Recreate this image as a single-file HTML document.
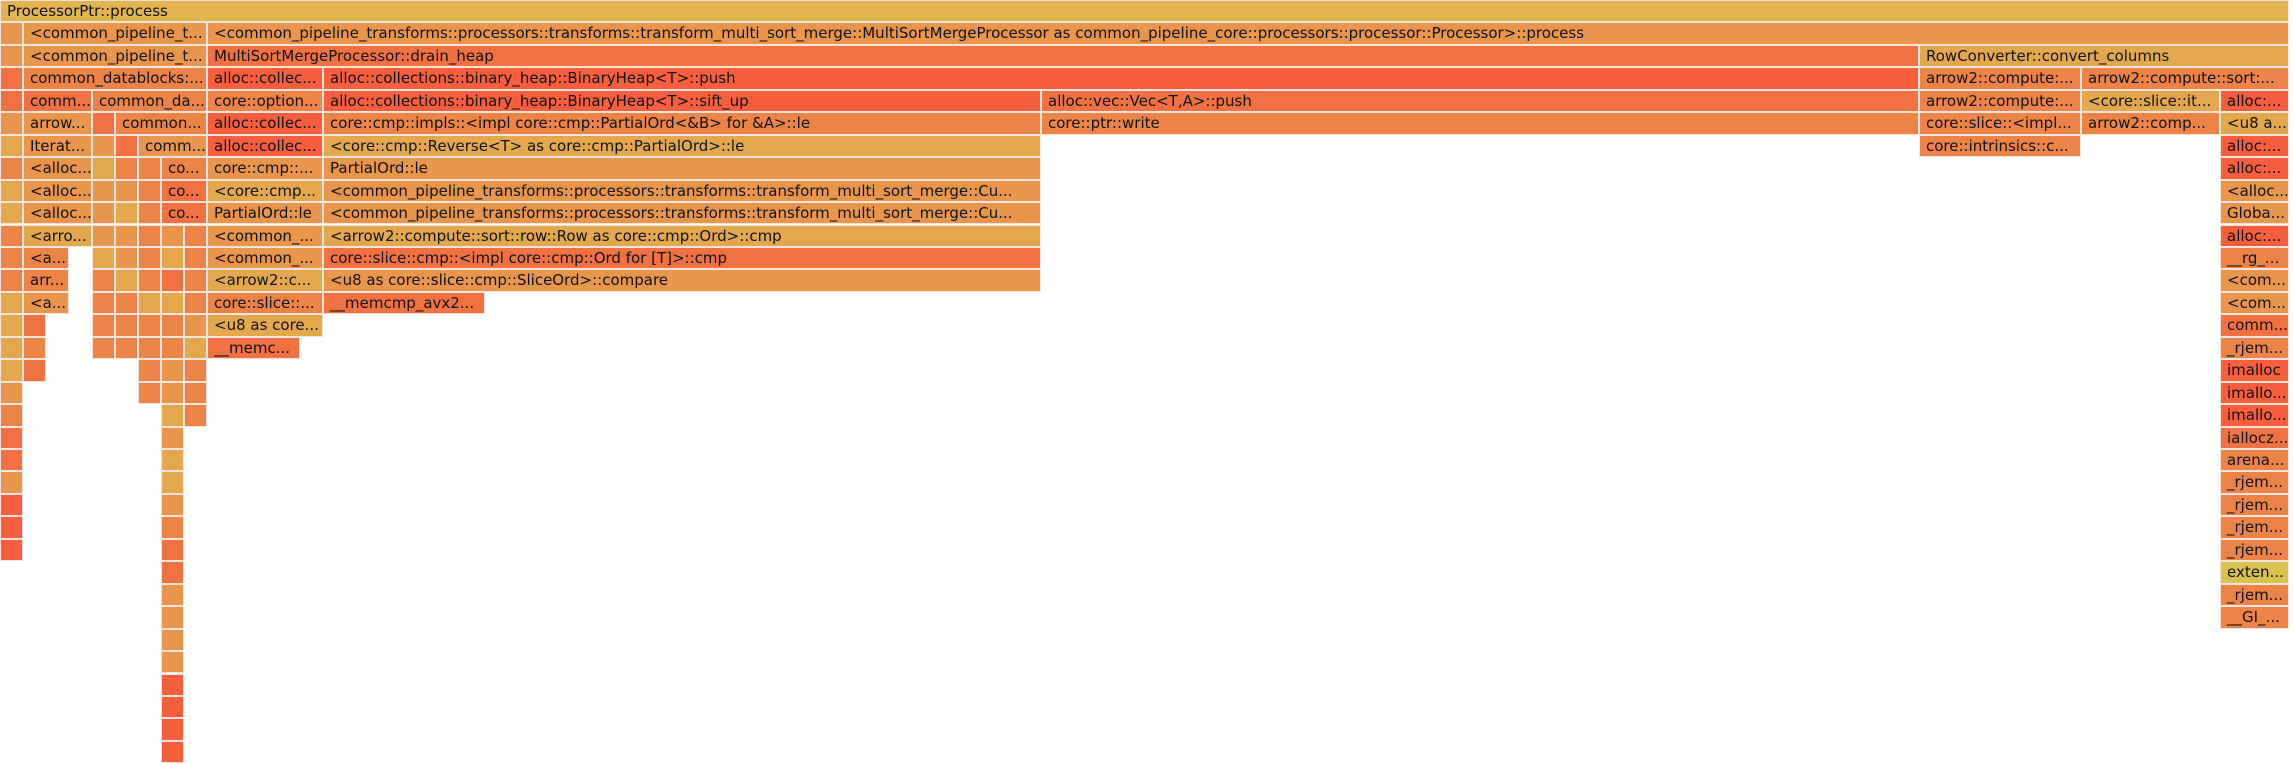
<!DOCTYPE html>
<html><head><meta charset="utf-8"><style>
html,body{margin:0;padding:0;background:#fff;width:2293px;height:764px;overflow:hidden}
.row{position:absolute;left:0;height:22.45px;width:2293px;top:calc(var(--r)*22.45px)}
.f{position:absolute;top:0;height:22.45px;box-sizing:border-box;border:1px solid #f4e3dc;font:15px "DejaVu Sans","Liberation Sans",sans-serif;color:#111;white-space:nowrap;overflow:hidden;padding-left:6px;line-height:20px}
.t{background:#e2b552}
.y{background:#e3a84e}
.a{background:#e7964c}
.b{background:#ec8447}
.c{background:#f07242}
.r{background:#f65e3e}
.g{background:#d9c24f}
</style></head><body>
<div class="row" style="--r:0"><div class="f t" style="left:0;width:2289px">ProcessorPtr::process</div></div>
<div class="row" style="--r:1"><div class="f a" style="left:0;width:23px"></div><div class="f a" style="left:23px;width:184px">&lt;common_pipeline_t...</div><div class="f a" style="left:207px;width:2082px">&lt;common_pipeline_transforms::processors::transforms::transform_multi_sort_merge::MultiSortMergeProcessor as common_pipeline_core::processors::processor::Processor&gt;::process</div></div>
<div class="row" style="--r:2"><div class="f a" style="left:0;width:23px"></div><div class="f a" style="left:23px;width:184px">&lt;common_pipeline_t...</div><div class="f c" style="left:207px;width:1712px">MultiSortMergeProcessor::drain_heap</div><div class="f y" style="left:1919px;width:370px">RowConverter::convert_columns</div></div>
<div class="row" style="--r:3"><div class="f c" style="left:0;width:23px"></div><div class="f b" style="left:23px;width:184px">common_datablocks:...</div><div class="f r" style="left:207px;width:116px">alloc::collec...</div><div class="f r" style="left:323px;width:1596px">alloc::collections::binary_heap::BinaryHeap&lt;T&gt;::push</div><div class="f b" style="left:1919px;width:162px">arrow2::compute:...</div><div class="f b" style="left:2081px;width:208px">arrow2::compute::sort:...</div></div>
<div class="row" style="--r:4"><div class="f c" style="left:0;width:23px"></div><div class="f c" style="left:23px;width:69px">comm...</div><div class="f b" style="left:92px;width:115px">common_da...</div><div class="f b" style="left:207px;width:116px">core::option...</div><div class="f r" style="left:323px;width:718px">alloc::collections::binary_heap::BinaryHeap&lt;T&gt;::sift_up</div><div class="f c" style="left:1041px;width:878px">alloc::vec::Vec&lt;T,A&gt;::push</div><div class="f b" style="left:1919px;width:162px">arrow2::compute:...</div><div class="f y" style="left:2081px;width:139px">&lt;core::slice::it...</div><div class="f r" style="left:2220px;width:69px">alloc:...</div></div>
<div class="row" style="--r:5"><div class="f a" style="left:0;width:23px"></div><div class="f a" style="left:23px;width:69px">arrow...</div><div class="f c" style="left:92px;width:23px"></div><div class="f b" style="left:115px;width:92px">common...</div><div class="f r" style="left:207px;width:116px">alloc::collec...</div><div class="f b" style="left:323px;width:718px">core::cmp::impls::&lt;impl core::cmp::PartialOrd&lt;&amp;B&gt; for &amp;A&gt;::le</div><div class="f b" style="left:1041px;width:878px">core::ptr::write</div><div class="f b" style="left:1919px;width:162px">core::slice::&lt;impl...</div><div class="f b" style="left:2081px;width:139px">arrow2::comp...</div><div class="f y" style="left:2220px;width:69px">&lt;u8 a...</div></div>
<div class="row" style="--r:6"><div class="f y" style="left:0;width:23px"></div><div class="f a" style="left:23px;width:69px">Iterat...</div><div class="f a" style="left:92px;width:23px"></div><div class="f c" style="left:115px;width:23px"></div><div class="f a" style="left:138px;width:69px">comm...</div><div class="f r" style="left:207px;width:116px">alloc::collec...</div><div class="f y" style="left:323px;width:718px">&lt;core::cmp::Reverse&lt;T&gt; as core::cmp::PartialOrd&gt;::le</div><div class="f b" style="left:1919px;width:162px">core::intrinsics::c...</div><div class="f r" style="left:2220px;width:69px">alloc:...</div></div>
<div class="row" style="--r:7"><div class="f b" style="left:0;width:23px"></div><div class="f a" style="left:23px;width:69px">&lt;alloc...</div><div class="f y" style="left:92px;width:23px"></div><div class="f b" style="left:115px;width:23px"></div><div class="f b" style="left:138px;width:23px"></div><div class="f b" style="left:161px;width:46px">co...</div><div class="f a" style="left:207px;width:116px">core::cmp::...</div><div class="f a" style="left:323px;width:718px">PartialOrd::le</div><div class="f r" style="left:2220px;width:69px">alloc:...</div></div>
<div class="row" style="--r:8"><div class="f y" style="left:0;width:23px"></div><div class="f a" style="left:23px;width:69px">&lt;alloc...</div><div class="f a" style="left:92px;width:23px"></div><div class="f a" style="left:115px;width:23px"></div><div class="f b" style="left:138px;width:23px"></div><div class="f c" style="left:161px;width:46px">co...</div><div class="f y" style="left:207px;width:116px">&lt;core::cmp...</div><div class="f a" style="left:323px;width:718px">&lt;common_pipeline_transforms::processors::transforms::transform_multi_sort_merge::Cu...</div><div class="f a" style="left:2220px;width:69px">&lt;alloc...</div></div>
<div class="row" style="--r:9"><div class="f y" style="left:0;width:23px"></div><div class="f a" style="left:23px;width:69px">&lt;alloc...</div><div class="f a" style="left:92px;width:23px"></div><div class="f y" style="left:115px;width:23px"></div><div class="f b" style="left:138px;width:23px"></div><div class="f c" style="left:161px;width:46px">co...</div><div class="f a" style="left:207px;width:116px">PartialOrd::le</div><div class="f a" style="left:323px;width:718px">&lt;common_pipeline_transforms::processors::transforms::transform_multi_sort_merge::Cu...</div><div class="f a" style="left:2220px;width:69px">Globa...</div></div>
<div class="row" style="--r:10"><div class="f b" style="left:0;width:23px"></div><div class="f y" style="left:23px;width:69px">&lt;arro...</div><div class="f a" style="left:92px;width:23px"></div><div class="f a" style="left:115px;width:23px"></div><div class="f b" style="left:138px;width:23px"></div><div class="f a" style="left:161px;width:23px"></div><div class="f b" style="left:184px;width:23px"></div><div class="f a" style="left:207px;width:116px">&lt;common_...</div><div class="f y" style="left:323px;width:718px">&lt;arrow2::compute::sort::row::Row as core::cmp::Ord&gt;::cmp</div><div class="f r" style="left:2220px;width:69px">alloc:...</div></div>
<div class="row" style="--r:11"><div class="f b" style="left:0;width:23px"></div><div class="f b" style="left:23px;width:46px">&lt;a...</div><div class="f y" style="left:92px;width:23px"></div><div class="f a" style="left:115px;width:23px"></div><div class="f b" style="left:138px;width:23px"></div><div class="f y" style="left:161px;width:23px"></div><div class="f b" style="left:184px;width:23px"></div><div class="f a" style="left:207px;width:116px">&lt;common_...</div><div class="f c" style="left:323px;width:718px">core::slice::cmp::&lt;impl core::cmp::Ord for [T]&gt;::cmp</div><div class="f b" style="left:2220px;width:69px">__rg_...</div></div>
<div class="row" style="--r:12"><div class="f b" style="left:0;width:23px"></div><div class="f b" style="left:23px;width:46px">arr...</div><div class="f b" style="left:92px;width:23px"></div><div class="f y" style="left:115px;width:23px"></div><div class="f b" style="left:138px;width:23px"></div><div class="f c" style="left:161px;width:23px"></div><div class="f b" style="left:184px;width:23px"></div><div class="f y" style="left:207px;width:116px">&lt;arrow2::c...</div><div class="f a" style="left:323px;width:718px">&lt;u8 as core::slice::cmp::SliceOrd&gt;::compare</div><div class="f a" style="left:2220px;width:69px">&lt;com...</div></div>
<div class="row" style="--r:13"><div class="f y" style="left:0;width:23px"></div><div class="f a" style="left:23px;width:46px">&lt;a...</div><div class="f b" style="left:92px;width:23px"></div><div class="f b" style="left:115px;width:23px"></div><div class="f y" style="left:138px;width:23px"></div><div class="f y" style="left:161px;width:23px"></div><div class="f b" style="left:184px;width:23px"></div><div class="f b" style="left:207px;width:116px">core::slice::...</div><div class="f c" style="left:323px;width:162px">__memcmp_avx2...</div><div class="f a" style="left:2220px;width:69px">&lt;com...</div></div>
<div class="row" style="--r:14"><div class="f y" style="left:0;width:23px"></div><div class="f c" style="left:23px;width:23px"></div><div class="f b" style="left:92px;width:23px"></div><div class="f b" style="left:115px;width:23px"></div><div class="f b" style="left:138px;width:23px"></div><div class="f b" style="left:161px;width:23px"></div><div class="f a" style="left:184px;width:23px"></div><div class="f y" style="left:207px;width:116px">&lt;u8 as core...</div><div class="f c" style="left:2220px;width:69px">comm...</div></div>
<div class="row" style="--r:15"><div class="f y" style="left:0;width:23px"></div><div class="f b" style="left:23px;width:23px"></div><div class="f b" style="left:92px;width:23px"></div><div class="f b" style="left:115px;width:23px"></div><div class="f b" style="left:138px;width:23px"></div><div class="f b" style="left:161px;width:23px"></div><div class="f y" style="left:184px;width:23px"></div><div class="f c" style="left:207px;width:93px">__memc...</div><div class="f b" style="left:2220px;width:69px">_rjem...</div></div>
<div class="row" style="--r:16"><div class="f y" style="left:0;width:23px"></div><div class="f c" style="left:23px;width:23px"></div><div class="f b" style="left:138px;width:23px"></div><div class="f a" style="left:161px;width:23px"></div><div class="f b" style="left:184px;width:23px"></div><div class="f r" style="left:2220px;width:69px">imalloc</div></div>
<div class="row" style="--r:17"><div class="f a" style="left:0;width:23px"></div><div class="f b" style="left:138px;width:23px"></div><div class="f a" style="left:161px;width:23px"></div><div class="f b" style="left:184px;width:23px"></div><div class="f r" style="left:2220px;width:69px">imallo...</div></div>
<div class="row" style="--r:18"><div class="f b" style="left:0;width:23px"></div><div class="f y" style="left:161px;width:23px"></div><div class="f b" style="left:184px;width:23px"></div><div class="f r" style="left:2220px;width:69px">imallo...</div></div>
<div class="row" style="--r:19"><div class="f c" style="left:0;width:23px"></div><div class="f a" style="left:161px;width:23px"></div><div class="f c" style="left:2220px;width:69px">iallocz...</div></div>
<div class="row" style="--r:20"><div class="f c" style="left:0;width:23px"></div><div class="f y" style="left:161px;width:23px"></div><div class="f b" style="left:2220px;width:69px">arena...</div></div>
<div class="row" style="--r:21"><div class="f a" style="left:0;width:23px"></div><div class="f y" style="left:161px;width:23px"></div><div class="f b" style="left:2220px;width:69px">_rjem...</div></div>
<div class="row" style="--r:22"><div class="f r" style="left:0;width:23px"></div><div class="f a" style="left:161px;width:23px"></div><div class="f b" style="left:2220px;width:69px">_rjem...</div></div>
<div class="row" style="--r:23"><div class="f r" style="left:0;width:23px"></div><div class="f b" style="left:161px;width:23px"></div><div class="f b" style="left:2220px;width:69px">_rjem...</div></div>
<div class="row" style="--r:24"><div class="f r" style="left:0;width:23px"></div><div class="f c" style="left:161px;width:23px"></div><div class="f b" style="left:2220px;width:69px">_rjem...</div></div>
<div class="row" style="--r:25"><div class="f c" style="left:161px;width:23px"></div><div class="f g" style="left:2220px;width:69px">exten...</div></div>
<div class="row" style="--r:26"><div class="f a" style="left:161px;width:23px"></div><div class="f b" style="left:2220px;width:69px">_rjem...</div></div>
<div class="row" style="--r:27"><div class="f a" style="left:161px;width:23px"></div><div class="f b" style="left:2220px;width:69px">__GI_...</div></div>
<div class="row" style="--r:28"><div class="f a" style="left:161px;width:23px"></div></div>
<div class="row" style="--r:29"><div class="f a" style="left:161px;width:23px"></div></div>
<div class="row" style="--r:30"><div class="f r" style="left:161px;width:23px"></div></div>
<div class="row" style="--r:31"><div class="f r" style="left:161px;width:23px"></div></div>
<div class="row" style="--r:32"><div class="f r" style="left:161px;width:23px"></div></div>
<div class="row" style="--r:33"><div class="f r" style="left:161px;width:23px"></div></div>
</body></html>
